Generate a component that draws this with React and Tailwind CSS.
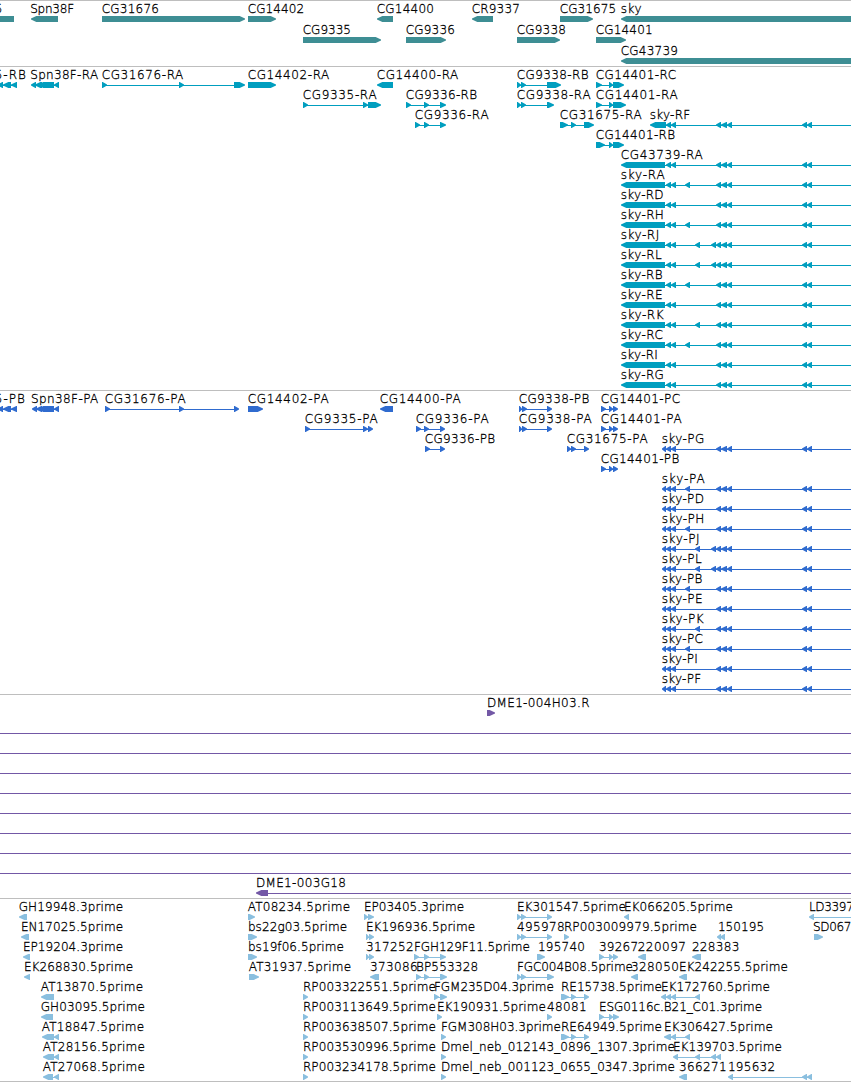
import React from 'react';

const END = 851;

// Feature: [label, inkLeft, inkRight, strand, exons, runsPastRightEdge]
const skyExons = (head, extra = []) => [...head, [666, 671], [671, 676], ...extra, [716, 721], [721, 727], [727, 732], [802, 807], [807, 812]];
const NEAR = [[685, 690]];
const MID = [[695, 700]];
const MIDFAR = [[695, 700], [711, 716]];

const skyRow = (head, left) => ([suffix, right, extra]) => [['sky-' + suffix, left, right, 'L', skyExons(head, extra), true]];

const genes = [
  [
    ['5', -4.5, 2.2, 'L', [[-20, 14]]],
    ['Spn38F', 31, 73.5, 'L', [[31, 58]]],
    ['CG31676', 102.5, 158.3, 'R', [[102, 245]]],
    ['CG14402', 248.5, 303.5, 'R', [[248, 276]]],
    ['CG14400', 377.5, 433.3, 'L', [[377, 393]]],
    ['CR9337', 472.5, 519.3, 'L', [[472, 493]]],
    ['CG31675', 560.5, 615.5, 'R', [[560, 593]]],
    ['sky', 621.5, 641, 'L', [[621, 870]]],
  ],
  [
    ['CG9335', 303.5, 350.3, 'R', [[303, 381]]],
    ['CG9336', 406.5, 454.3, 'R', [[406, 446]]],
    ['CG9338', 517.5, 565.3, 'R', [[517, 560]]],
    ['CG14401', 596.5, 652, 'R', [[596, 626]]],
  ],
  [['CG43739', 621.5, 677.3, 'L', [[621, 870]]]],
];

const transcripts = [
  [
    ['5-RB', -4.5, 25.3, 'L', [[-2, 3], [3, 11], [11, 17]]],
    ['Spn38F-RA', 31, 97.5, 'L', [[31, 36], [35, 42], [38, 54], [54, 59]]],
    ['CG31676-RA', 102.5, 182.7, 'R', [[102, 107], [179, 184], [234, 245]]],
    ['CG14402-RA', 248.5, 328.7, 'R', [[248, 276]]],
    ['CG14400-RA', 377.5, 457.7, 'L', [[377, 393]]],
    ['CG9338-RB', 517.5, 588, 'R', [[517, 521], [521, 526], [547, 561]]],
    ['CG14401-RC', 596.5, 675.5, 'R', [[596, 602], [609, 613], [613, 624]]],
  ],
  [
    ['CG9335-RA', 303.5, 376, 'R', [[303, 308], [363, 368], [368, 381]]],
    ['CG9336-RB', 406.5, 476.5, 'R', [[406, 411], [424, 429], [440, 446]]],
    ['CG9338-RA', 517.5, 590, 'R', [[517, 521], [521, 526], [547, 554]]],
    ['CG14401-RA', 596.5, 677, 'R', [[596, 602], [609, 613], [613, 626]]],
  ],
  [
    ['CG9336-RA', 415.5, 488, 'R', [[415, 420], [424, 429], [440, 446]]],
    ['CG31675-RA', 560.5, 641, 'R', [[560, 568], [571, 576], [584, 594]]],
    ['sky-RF', 650.5, 689.5, 'L', skyExons([[650, 666]]), true],
  ],
  [['CG14401-RB', 596.5, 674.5, 'R', [[596, 605], [609, 613], [613, 624]]]],
  [['CG43739-RA', 621.5, 702, 'L', skyExons([[621, 665]]), true]],
  ...[
    ['RA', 664, NEAR], ['RD', 663], ['RH', 663.3, NEAR], ['RJ', 658.7, MIDFAR], ['RL', 661, MIDFAR], ['RB', 662, NEAR],
    ['RE', 662], ['RK', 663, MID], ['RC', 662.3, NEAR], ['RI', 657.3], ['RG', 663.3],
  ].map(skyRow([[621, 665]], 621.5)),
];

const proteins = [
  [
    ['5-PB', -4.5, 24.3, 'L', [[-2, 3], [3, 11], [11, 17]]],
    ['Spn38F-PA', 31.7, 97.7, 'L', [[32, 37], [36, 42], [38, 54], [54, 59]]],
    ['CG31676-PA', 105.5, 185, 'R', [[105, 110], [179, 184], [234, 239]]],
    ['CG14402-PA', 248.5, 328, 'R', [[248, 263]]],
    ['CG14400-PA', 380.5, 460, 'L', [[380, 393]]],
    ['CG9338-PB', 519.5, 588.7, 'R', [[519, 522], [522, 527], [547, 552]]],
    ['CG14401-PC', 601.5, 679.5, 'R', [[601, 606], [609, 613], [613, 618]]],
  ],
  [
    ['CG9335-PA', 305.5, 377, 'R', [[305, 310], [363, 368], [368, 373]]],
    ['CG9336-PA', 416.5, 488, 'R', [[416, 421], [424, 429], [440, 445]]],
    ['CG9338-PA', 519.5, 591, 'R', [[519, 522], [522, 527], [547, 552]]],
    ['CG14401-PA', 601.5, 681, 'R', [[601, 606], [609, 613], [613, 618]]],
  ],
  [
    ['CG9336-PB', 425.5, 494.5, 'R', [[425, 430], [440, 445]]],
    ['CG31675-PA', 567.5, 647, 'R', [[567, 571], [571, 576], [584, 589]]],
    ['sky-PG', 662.5, 703.7, 'L', skyExons([[662, 666]]), true],
  ],
  [['CG14401-PB', 601.5, 678.7, 'R', [[601, 606], [609, 613], [613, 618]]]],
  ...[
    ['PA', 704, NEAR], ['PD', 703.3], ['PH', 703.7, NEAR], ['PJ', 699, MIDFAR], ['PL', 701, MIDFAR], ['PB', 701.7, NEAR],
    ['PE', 702], ['PK', 703, MID], ['PC', 702.3, NEAR], ['PI', 697.3], ['PF', 700.5],
  ].map(skyRow([[662, 666]], 662.5)),
];

const spanning = [['', 0, 0, 'N', [], true]];
const clones = [
  [['DME1-004H03.R', 487.7, 589, 'R', [[487, 495]]]],
  ...Array(8).fill(spanning),
  [['DME1-003G18', 256.7, 345.3, 'L', [[256, 268]], true]],
];

const RP = (id) => ['RP' + id + '.5prime', 303.7, 435.3, 'R', [[303, 308]]];
const RE = (id) => ['RE' + id + '.5prime', 561.7, 661.3, 'R', [[561, 569], [571, 576], [584, 589]]];

const ests = [
  [
    ['GH19948.3prime', 19.5, 122.5, 'L', [[19, 27]]],
    ['AT08234.5prime', 248.5, 349.5, 'R', [[248, 255]]],
    ['EP03405.3prime', 364.7, 463.5, 'R', [[364, 368], [368, 374]]],
    ['EK301547.5prime', 517.7, 625.3, 'R', [[517, 521], [521, 526], [547, 552]]],
    ['EK066205.5prime', 624.7, 732.3, 'L', [[624, 629]]],
    ['LD33979', 809.7, 860.5, 'L', [[809, 814]], true],
  ],
  [
    ['EN17025.5prime', 21.7, 122.5, 'L', [[21, 29]]],
    ['bs22g03.5prime', 248.7, 346.5, 'R', [[248, 257]]],
    ['EK196936.5prime', 366.7, 474.5, 'R', [[366, 369], [369, 374]]],
    ['495978', 517.7, 564, 'R', [[517, 521], [521, 526], [547, 552]]],
    ['RP003009979.5prime', 564.7, 696.3, 'R', [[564, 569]]],
    ['150195', 718.7, 763.5, 'L', [[717, 721], [720, 725]]],
    ['SD06787', 813.7, 865.5, 'R', [[814, 823]]],
  ],
  [
    ['EP19204.3prime', 23.7, 122.5, 'L', [[23, 30]]],
    ['bs19f06.5prime', 248.7, 343.3, 'R', [[248, 257]]],
    ['317252', 366.7, 413, 'R', [[366, 369], [369, 374]]],
    ['FGH129F11.5prime', 414.7, 529.3, 'R', [[414, 419], [424, 429], [440, 446]]],
    ['195740', 538.7, 584.3, 'R', [[537, 545]]],
    ['39267', 599.7, 637.5, 'R', [[599, 604], [609, 613], [613, 618]]],
    ['220097', 638.5, 685.3, 'L', [[638, 646]]],
    ['228383', 692.7, 738.7, 'L', [[692, 701]]],
  ],
  [
    ['EK268830.5prime', 24.7, 132.5, 'L', [[24, 30]]],
    ['AT31937.5prime', 249.5, 350.5, 'R', [[249, 259]]],
    ['373086', 370.7, 417, 'L', [[370, 379]]],
    ['BP553328', 416.7, 477.5, 'R', [[416, 421], [424, 429], [440, 447]]],
    ['FGC004B08.5prime', 517.7, 632.3, 'R', [[517, 521], [521, 526], [547, 554]]],
    ['328050', 631.7, 678.3, 'L', [[631, 638]]],
    ['EK242255.5prime', 679.7, 787.3, 'L', [[679, 687]]],
  ],
  [
    ['AT13870.5prime', 41.5, 142.5, 'L', [[41, 54]]],
    RP('003322551'),
    ['FGM235D04.3prime', 434.7, 553.3, 'R', [[434, 439], [440, 447]]],
    RE('15738'),
    ['EK172760.5prime', 661.7, 769.3, 'L', [[661, 666], [666, 671], [671, 676], [695, 700]]],
  ],
  [
    ['GH03095.5prime', 41.5, 144.3, 'L', [[41, 53]]],
    RP('003113649'),
    ['EK190931.5prime', 437.7, 545.3, 'R', [[437, 442]]],
    ['48081', 547.7, 586, 'R', [[547, 552]]],
    ['ESG0116c.B21_C01.3prime', 599.7, 761.5, 'R', [[599, 604], [609, 613], [613, 619]]],
  ],
  [
    ['AT18847.5prime', 42.5, 143.5, 'L', [[42, 54], [54, 59]]],
    RP('003638507'),
    ['FGM308H03.3prime', 441.7, 560.3, 'R', [[441, 446]]],
    RE('64949'),
    ['EK306427.5prime', 664.7, 772.3, 'L', [[664, 671], [671, 676], [685, 690]]],
  ],
  [
    ['AT28156.5prime', 43.5, 144.3, 'L', [[43, 54], [54, 59]]],
    RP('003530996'),
    ['Dmel_neb_012143_0896_1307.3prime', 441.7, 674.3, 'R', [[441, 446]]],
    ['EK139703.5prime', 673.7, 781.3, 'L', [[673, 678], [695, 700], [711, 716], [716, 721]]],
  ],
  [
    ['AT27068.5prime', 43.5, 144.3, 'L', [[43, 53], [54, 59]]],
    RP('003234178'),
    ['Dmel_neb_001123_0655_0347.3prime', 441.7, 674.3, 'R', [[441, 446]]],
    ['366271', 679.7, 726, 'L', [[679, 687]]],
    ['195632', 728.7, 774.5, 'L', [[728, 733], [802, 807], [807, 812]]],
  ],
];

function exonPoints([a, b], strand) {
  const tip = Math.min(6, b - a);
  if (strand === 'R') return `${a},16 ${b - tip + 0.7},16 ${b},18.5 ${b},19.5 ${b - tip + 0.7},22 ${a},22`;
  return `${b},16 ${a + tip - 0.7},16 ${a},18.5 ${a},19.5 ${a + tip - 0.7},22 ${b},22`;
}

function Feature({ data }) {
  const [label, left, right, strand, exons, open] = data;
  const start = exons.length ? exons[0][0] + 2 : 0;
  const stop = open ? END : exons[exons.length - 1][1] - 2;
  return (
    <g>
      {(open || exons.length > 1) && <rect x={start} y={19} width={stop - start} height={1} />}
      {exons.map((e, i) => <polygon key={i} points={exonPoints(e, strand)} />)}
      {label && (
        <text x={left - 0.8} y={13} textLength={right - left + 1.4} lengthAdjust="spacing" className="fill-black stroke-black [stroke-width:0.3px]">
          {label}
        </text>
      )}
    </g>
  );
}

function Track({ rows, color, rowClass, className }) {
  return (
    <section className={`border-t border-[#bebebe] ${className}`}>
      <div className="-mt-px flex flex-col">
        {rows.map((row, i) => (
          <svg key={i} className={`block w-full shrink-0 overflow-visible ${rowClass} ${color}`}>
            {row.map((f, j) => <Feature key={j} data={f} />)}
          </svg>
        ))}
      </div>
    </section>
  );
}

export default function App() {
  return (
    <main className="flex h-[1082px] w-[851px] flex-col overflow-hidden border-b border-[#bebebe] bg-white font-['DejaVu_Sans_Light','DejaVu_Sans',sans-serif] text-[12px] font-extralight">
      <Track rows={genes} color="fill-[#3e8e94]" rowClass="h-[21px]" className="h-[66px]" />
      <Track rows={transcripts} color="fill-[#009ebf]" rowClass="h-5" className="h-[324px]" />
      <Track rows={proteins} color="fill-[#2f6bcf]" rowClass="h-5" className="h-[304px]" />
      <Track rows={clones} color="fill-[#7358a6]" rowClass="h-5" className="h-[204px]" />
      <Track rows={ests} color="fill-[#8abfdf]" rowClass="h-5" className="h-[183px]" />
    </main>
  );
}
